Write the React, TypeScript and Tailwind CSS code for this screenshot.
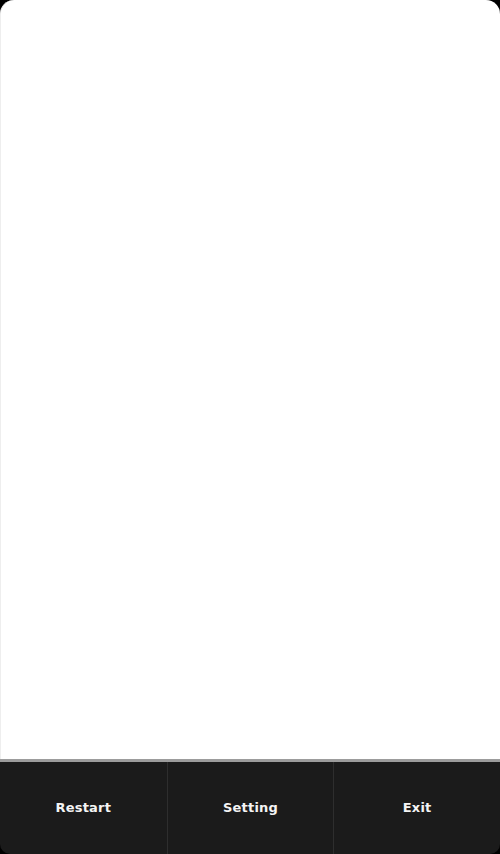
export default function App() {
  const buttons = ["Restart", "Setting", "Exit"];

  return (
    <div className="w-[500px] h-[854px] bg-black flex flex-col overflow-hidden">
      {/* game area */}
      <div className="h-[759px] bg-white rounded-t-[14px] border-l border-[#eeeeee]" />

      {/* bottom menu */}
      <div className="h-[3px] bg-[#9c9c9c]" />
      <div className="flex-1 grid grid-cols-3 bg-[#1b1b1b] rounded-b-[10px] overflow-hidden">
        {buttons.map((label, i) => (
          <button
            key={label}
            className={`flex items-center justify-center text-[#f4f4f4] text-[13px] font-bold tracking-[0.2px] font-['DejaVu_Sans',sans-serif] ${
              i > 0 ? "border-l border-[#2e2e2e]" : ""
            }`}
          >
            {label}
          </button>
        ))}
      </div>
    </div>
  );
}
